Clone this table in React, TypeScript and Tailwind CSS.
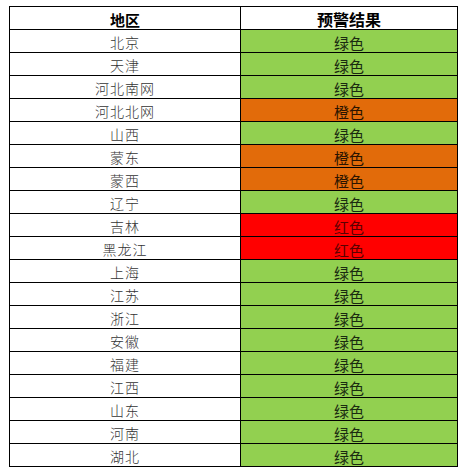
import React from "react";

const rows: [string, "g" | "o" | "r"][] = [
  ["北京", "g"],
  ["天津", "g"],
  ["河北南网", "g"],
  ["河北北网", "o"],
  ["山西", "g"],
  ["蒙东", "o"],
  ["蒙西", "o"],
  ["辽宁", "g"],
  ["吉林", "r"],
  ["黑龙江", "r"],
  ["上海", "g"],
  ["江苏", "g"],
  ["浙江", "g"],
  ["安徽", "g"],
  ["福建", "g"],
  ["江西", "g"],
  ["山东", "g"],
  ["河南", "g"],
  ["湖北", "g"],
];

const label = { g: "绿色", o: "橙色", r: "红色" };
const bg = { g: "bg-[#92d050]", o: "bg-[#e26b0a]", r: "bg-[#ff0000]" };
const fg = { g: "text-[#1a2a10]", o: "text-[#2a1400]", r: "text-[#5a0000]" };

export default function App() {
  return (
    <div className="w-[467px] h-[468px] bg-white pt-[6px] pl-[9px]" style={{ fontFamily: '"Noto Sans CJK SC", "Noto Sans", sans-serif' }}>
      <div className="w-[449px] grid grid-cols-[231px_217px] border-t border-l border-black">
        <div className="h-[23px] border-r border-b border-black flex items-center justify-center text-[15px] font-bold text-black leading-none pt-[2px]">
          地区
        </div>
        <div className="h-[23px] border-r border-b border-black flex items-center justify-center text-[16px] font-bold text-black leading-none pt-[2px]">
          预警结果
        </div>
        {rows.map(([name, c]) => (
          <React.Fragment key={name}>
            <div className="h-[23px] border-r border-b border-black flex items-center justify-center text-[14px] text-[#333] tracking-[1px] leading-none pt-[2px] font-light">
              {name}
            </div>
            <div className={`h-[23px] border-r border-b border-black flex items-center justify-center text-[15px] leading-none pt-[3px] ${bg[c]} ${fg[c]}`}>
              {label[c]}
            </div>
          </React.Fragment>
        ))}
      </div>
    </div>
  );
}
